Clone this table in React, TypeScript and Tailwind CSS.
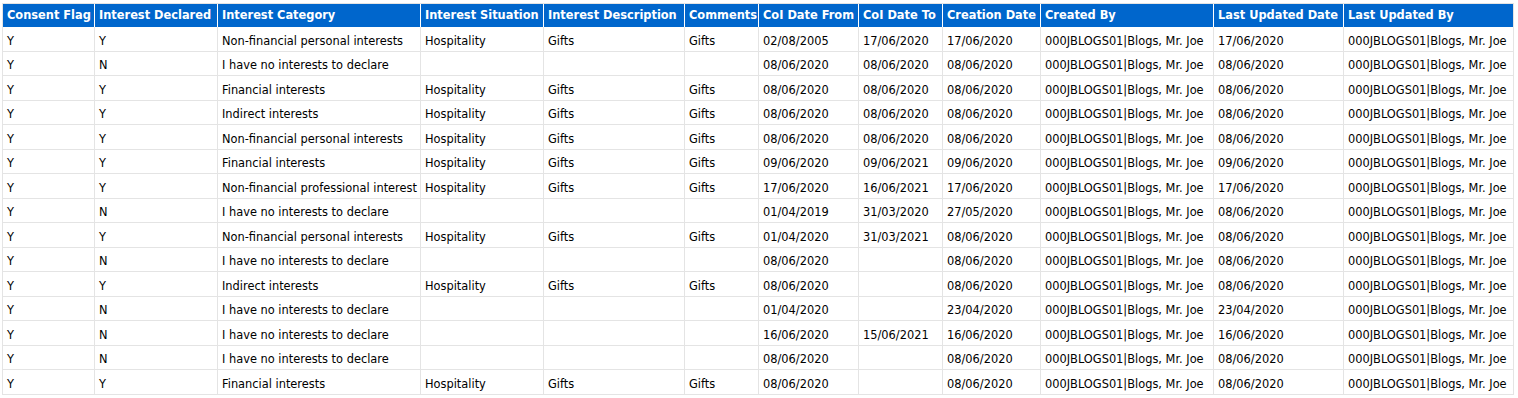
const cols = [
  { label: "Consent Flag", w: "w-[92px]" },
  { label: "Interest Declared", w: "w-[123px]" },
  { label: "Interest Category", w: "w-[203px]" },
  { label: "Interest Situation", w: "w-[123px]" },
  { label: "Interest Description", w: "w-[141px]" },
  { label: "Comments", w: "w-[74px]" },
  { label: "CoI Date From", w: "w-[100px]" },
  { label: "CoI Date To", w: "w-[84px]" },
  { label: "Creation Date", w: "w-[98px]" },
  { label: "Created By", w: "w-[173px]" },
  { label: "Last Updated Date", w: "w-[130px]" },
  { label: "Last Updated By", w: "w-[170px]" },
];

const user = "000JBLOGS01|Blogs, Mr. Joe";
const none = "I have no interests to declare";

// consent, declared, category, hospitality?, from, to, created, updated
const rows: [string, string, string, boolean, string, string, string, string][] = [
  ["Y", "Y", "Non-financial personal interests", true, "02/08/2005", "17/06/2020", "17/06/2020", "17/06/2020"],
  ["Y", "N", none, false, "08/06/2020", "08/06/2020", "08/06/2020", "08/06/2020"],
  ["Y", "Y", "Financial interests", true, "08/06/2020", "08/06/2020", "08/06/2020", "08/06/2020"],
  ["Y", "Y", "Indirect interests", true, "08/06/2020", "08/06/2020", "08/06/2020", "08/06/2020"],
  ["Y", "Y", "Non-financial personal interests", true, "08/06/2020", "08/06/2020", "08/06/2020", "08/06/2020"],
  ["Y", "Y", "Financial interests", true, "09/06/2020", "09/06/2021", "09/06/2020", "09/06/2020"],
  ["Y", "Y", "Non-financial professional interest", true, "17/06/2020", "16/06/2021", "17/06/2020", "17/06/2020"],
  ["Y", "N", none, false, "01/04/2019", "31/03/2020", "27/05/2020", "08/06/2020"],
  ["Y", "Y", "Non-financial personal interests", true, "01/04/2020", "31/03/2021", "08/06/2020", "08/06/2020"],
  ["Y", "N", none, false, "08/06/2020", "", "08/06/2020", "08/06/2020"],
  ["Y", "Y", "Indirect interests", true, "08/06/2020", "", "08/06/2020", "08/06/2020"],
  ["Y", "N", none, false, "01/04/2020", "", "23/04/2020", "23/04/2020"],
  ["Y", "N", none, false, "16/06/2020", "15/06/2021", "16/06/2020", "16/06/2020"],
  ["Y", "N", none, false, "08/06/2020", "", "08/06/2020", "08/06/2020"],
  ["Y", "Y", "Financial interests", true, "08/06/2020", "", "08/06/2020", "08/06/2020"],
];

const App = () => {
  return (
    <div className="w-[1518px] h-[398px] overflow-hidden bg-white pt-[3px] pl-[2px] font-['Tahoma','DejaVu_Sans',sans-serif] text-[11.4px] text-black">
      <table className="table-fixed border-separate border-spacing-0 border-l border-t border-[#e4e4e4] w-[1511px]">
        <colgroup>
          {cols.map((c) => (
            <col key={c.label} className={c.w} />
          ))}
        </colgroup>
        <thead>
          <tr className="h-[23px] bg-[#0066cc] text-white">
            {cols.map((c) => (
              <th
                key={c.label}
                className="border-r border-white last:border-[#e4e4e4] pl-[4px] pr-0 pt-[1px] text-left font-bold whitespace-nowrap overflow-hidden"
              >
                {c.label}
              </th>
            ))}
          </tr>
        </thead>
        <tbody>
          {rows.map((r, i) => {
            const cells = [
              r[0],
              r[1],
              r[2],
              r[3] ? "Hospitality" : "",
              r[3] ? "Gifts" : "",
              r[3] ? "Gifts" : "",
              r[4],
              r[5],
              r[6],
              user,
              r[7],
              user,
            ];
            return (
              <tr key={i} className="h-[24.5px]">
                {cells.map((v, j) => (
                  <td
                    key={j}
                    className="border-r border-b border-[#e4e4e4] pl-[4px] pr-0 pt-[5px] whitespace-nowrap overflow-hidden"
                  >
                    {v}
                  </td>
                ))}
              </tr>
            );
          })}
        </tbody>
      </table>
    </div>
  );
};

export default App;
